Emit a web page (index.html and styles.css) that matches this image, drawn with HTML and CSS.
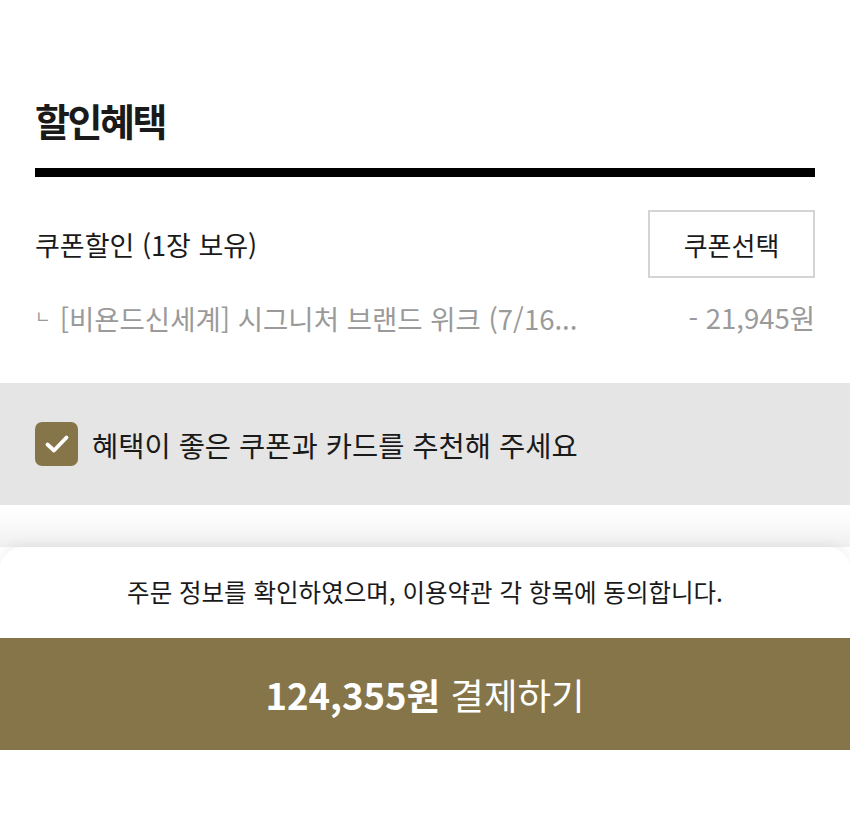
FILE: index.html
```html
<!DOCTYPE html>
<html lang="ko">
<head>
<meta charset="utf-8">
<link rel="stylesheet" href="styles.css">
</head>
<body>
<section class="discount">
  <h2 class="title">할인혜택</h2>
  <div class="rule"></div>
  <div class="coupon-row">
    <span class="coupon-label">쿠폰할인 (1장 보유)</span>
    <button class="coupon-btn">쿠폰선택</button>
  </div>
  <div class="coupon-detail">
    <span class="detail-name"><span class="corner">ㄴ</span>[비욘드신세계] 시그니처 브랜드 위크 (7/16...</span>
    <span class="detail-amount">- 21,945원</span>
  </div>
</section>
<section class="recommend">
  <span class="check">
    <svg width="26" height="22" viewBox="0 0 26 22"><path d="M3.5 11.5 L10 17.5 L22.5 4.5" fill="none" stroke="#fff" stroke-width="3.8" stroke-linecap="round" stroke-linejoin="round"/></svg>
  </span>
  <span class="recommend-text">혜택이 좋은 쿠폰과 카드를 추천해 주세요</span>
</section>
<div class="spacer"></div>
<footer class="pay-card">
  <p class="agree">주문 정보를 확인하였으며, 이용약관 각 항목에 동의합니다.</p>
  <button class="pay-btn"><b class="price">124,355원</b> 결제하기</button>
</footer>
</body>
</html>
```
FILE: styles.css
```css
html, body {
  margin: 0;
  padding: 0;
  background: #ffffff;
}
body {
  width: 850px;
  height: 824px;
  overflow: hidden;
  font-family: "Noto Sans CJK KR", "Noto Sans", sans-serif;
  color: #111;
}
.discount {
  padding: 92px 35px 0;
  height: 383px;
  box-sizing: border-box;
}
.title {
  margin: 0;
  font-size: 38px;
  line-height: 56px;
  font-weight: 700;
  letter-spacing: -2.5px;
  color: #1a1a1a;
}
.rule {
  margin-top: 20px;
  height: 9px;
  background: #000;
}
.coupon-row {
  margin-top: 33px;
  display: flex;
  justify-content: space-between;
  align-items: center;
}
.coupon-label {
  font-size: 27px;
  color: #1a1a1a;
}
.coupon-btn {
  width: 167px;
  height: 68px;
  border: 2px solid #d4d4d4;
  background: #fff;
  font-family: inherit;
  font-size: 26px;
  color: #1a1a1a;
  padding: 0;
}
.coupon-detail {
  margin-top: 18px;
  display: flex;
  justify-content: space-between;
  align-items: center;
  font-size: 27.5px;
  color: #9a9a9a;
  line-height: 40px;
}
.corner {
  display: inline-block;
  font-size: 17px;
  vertical-align: 7px;
  margin-right: 9px;
}
.recommend {
  height: 122px;
  background: #e5e5e5;
  display: flex;
  align-items: center;
  padding: 0 35px;
  gap: 14px;
}
.check {
  width: 43px;
  height: 44px;
  border-radius: 7px;
  background: #857549;
  display: flex;
  align-items: center;
  justify-content: center;
}
.recommend-text {
  font-size: 28.5px;
  color: #1a1a1a;
}
.spacer {
  height: 42px;
  background: linear-gradient(#ffffff 0%, #fbfbfb 40%, #efefef 100%);
}
.pay-card {
  background: #fff;
  border-radius: 22px 22px 0 0;
  box-shadow: 0 -4px 10px rgba(0,0,0,0.05);
  padding-top: 26px;
  height: 277px;
  box-sizing: border-box;
}
.agree {
  margin: 0;
  text-align: center;
  font-size: 24.5px;
  line-height: 38px;
  color: #1a1a1a;
}
.pay-btn {
  margin-top: 27px;
  display: block;
  width: 100%;
  height: 112px;
  border: 0;
  background: #857548;
  color: #fff;
  font-family: inherit;
  font-size: 36.5px;
  padding: 0;
}
.price {
  font-weight: 700;
}
```
